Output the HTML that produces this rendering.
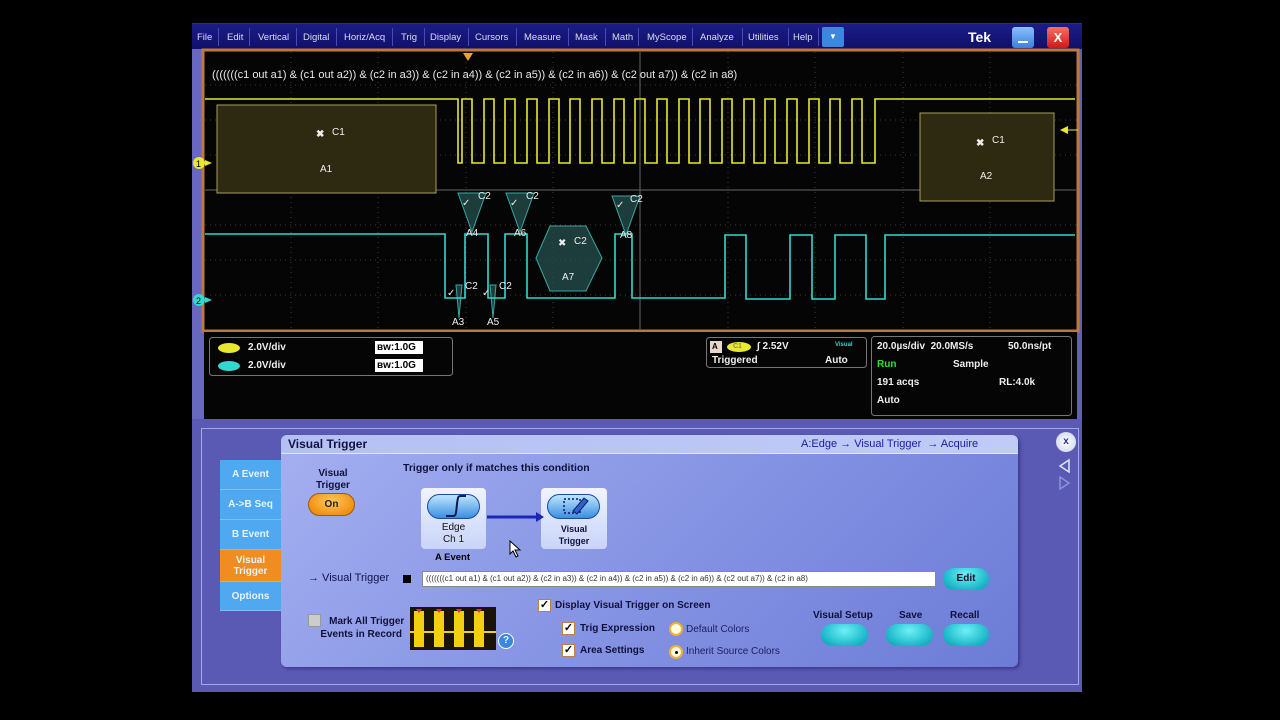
<!DOCTYPE html>
<html><head><meta charset="utf-8">
<style>
*{margin:0;padding:0;box-sizing:border-box}
body{width:1280px;height:720px;background:#000;position:relative;overflow:hidden;font-family:"Liberation Sans",sans-serif}
.abs{position:absolute}
.menu{left:192px;top:23px;width:890px;height:26px;background:linear-gradient(#1c1c88,#10106a);border-top:1px solid #2a2aa0}
.menu span{position:absolute;top:8px;font-size:9.5px;color:#dde;letter-spacing:0}
.sep{position:absolute;top:4px;width:1px;height:18px;background:#4a4ab0}
.lstrip{left:192px;top:49px;width:12px;height:643px;background:#6868c0}
.rstrip{left:1077px;top:49px;width:5px;height:371px;background:#6060b8}
.ro{color:#eee;font-size:10px;font-weight:bold;position:absolute}
.lower{left:192px;top:419px;width:890px;height:273px;background:#5a5ab4}
.dlg{left:281px;top:435px;width:737px;height:232px;border-radius:6px;background:linear-gradient(135deg,#a4b0f0 0%,#8694e4 50%,#6c7cd6 100%);box-shadow:2px 2px 3px #3a3a90}
.tab{position:absolute;left:220px;width:61px;background:#4fa8f0;color:#e8f4ff;font-size:10px;font-weight:bold;text-align:center;border-bottom:1px solid #7cc0f8}
.pill{position:absolute;border-radius:12px;background:radial-gradient(ellipse at 50% 30%,#6ef0f8,#1ab8c8 70%,#0f96aa);}
.cb{position:absolute;width:13px;height:13px;background:#fff;border:1px solid #c08040;font-size:11px;line-height:11px;text-align:center;color:#000;font-weight:bold}
.t{position:absolute;font-size:10px;font-weight:bold;color:#10103a}
</style></head><body>

<div class="abs menu">
<span style="left:5px">File</span><div class="sep" style="left:26px"></div>
<span style="left:35px">Edit</span><div class="sep" style="left:57px"></div>
<span style="left:66px">Vertical</span><div class="sep" style="left:104px"></div>
<span style="left:111px">Digital</span><div class="sep" style="left:144px"></div>
<span style="left:152px">Horiz/Acq</span><div class="sep" style="left:200px"></div>
<span style="left:209px">Trig</span><div class="sep" style="left:232px"></div>
<span style="left:238px">Display</span><div class="sep" style="left:276px"></div>
<span style="left:283px">Cursors</span><div class="sep" style="left:324px"></div>
<span style="left:332px">Measure</span><div class="sep" style="left:376px"></div>
<span style="left:383px">Mask</span><div class="sep" style="left:413px"></div>
<span style="left:420px">Math</span><div class="sep" style="left:446px"></div>
<span style="left:455px">MyScope</span><div class="sep" style="left:500px"></div>
<span style="left:508px">Analyze</span><div class="sep" style="left:550px"></div>
<span style="left:556px">Utilities</span><div class="sep" style="left:596px"></div>
<span style="left:601px">Help</span><div class="sep" style="left:626px"></div>
<div class="abs" style="left:630px;top:3px;width:22px;height:20px;background:#3a88e0;border-radius:2px;color:#fff;font-size:8px;text-align:center;line-height:20px">▼</div>
<div class="abs" style="left:776px;top:5px;color:#fff;font-weight:bold;font-size:14px">Tek</div>
<div class="abs" style="left:820px;top:3px;width:22px;height:21px;background:linear-gradient(#8cc0f8,#3a80e0);border-radius:3px"><div class="abs" style="left:6px;top:14px;width:10px;height:2px;background:#fff"></div></div>
<div class="abs" style="left:855px;top:3px;width:22px;height:21px;background:linear-gradient(#f87060,#d01818);border-radius:3px;color:#fff;font-weight:bold;font-size:13px;text-align:center;line-height:21px">X</div>
</div>
<div class="abs lstrip"></div>
<div class="abs rstrip"></div>

<svg class="abs" style="left:0;top:0" width="1280" height="420">
<rect x="203" y="50" width="875" height="281" fill="#050505" stroke="#c07838" stroke-width="3"/>
<g stroke="#3a3a3a" stroke-width="1" stroke-dasharray="1,4">
<line x1="291" y1="52" x2="291" y2="329"/><line x1="378" y1="52" x2="378" y2="329"/><line x1="466" y1="52" x2="466" y2="329"/><line x1="553" y1="52" x2="553" y2="329"/><line x1="728" y1="52" x2="728" y2="329"/><line x1="815" y1="52" x2="815" y2="329"/><line x1="903" y1="52" x2="903" y2="329"/><line x1="990" y1="52" x2="990" y2="329"/>
<line x1="205" y1="85" x2="1076" y2="85"/><line x1="205" y1="120" x2="1076" y2="120"/><line x1="205" y1="155" x2="1076" y2="155"/><line x1="205" y1="225" x2="1076" y2="225"/><line x1="205" y1="260" x2="1076" y2="260"/><line x1="205" y1="295" x2="1076" y2="295"/>
</g>
<g stroke="#666" stroke-width="1">
<line x1="205" y1="190" x2="1076" y2="190"/><line x1="640" y1="52" x2="640" y2="329"/>
</g>
<polygon points="463,53 473,53 468,61" fill="#f0a030"/>
<text x="212" y="78" fill="#e8e8e8" font-size="11" font-family="Liberation Sans">(((((((c1 out a1) &amp; (c1 out a2)) &amp; (c2 in a3)) &amp; (c2 in a4)) &amp; (c2 in a5)) &amp; (c2 in a6)) &amp; (c2 out a7)) &amp; (c2 in a8)</text>
<rect x="217" y="105" width="219" height="88" fill="#2e2a12" stroke="#a8a058"/>
<rect x="920" y="113" width="134" height="88" fill="#2e2a12" stroke="#a8a058"/>
<g fill="#24504e" fill-opacity="0.75" stroke="#3aa8a0">
<polygon points="458,193 486,193 472,232"/><polygon points="506,193 534,193 520,232"/><polygon points="612,196 640,196 626,235"/>
<polygon points="550,226 586,226 602,258 586,291 550,291 536,258"/>
<polygon points="456,285 462,285 459,318"/><polygon points="490,285 496,285 493,318"/>
</g>
<path d="M205,99 H458 V163 H462 V99 H472 V163 H484 V99 H494 V163 H505 V99 H515 V163 H527 V99 H537 V163 H549 V99 H559 V163 H570 V99 H580 V163 H592 V99 H602 V163 H614 V99 H624 V163 H635 V99 H645 V163 H657 V99 H667 V163 H679 V99 H689 V163 H700 V99 H710 V163 H722 V99 H732 V163 H744 V99 H754 V163 H765 V99 H775 V163 H787 V99 H797 V163 H809 V99 H819 V163 H830 V99 H840 V163 H852 V99 H862 V163 H875 V99 H1075" fill="none" stroke="#e8e830" stroke-width="1.6"/>
<path d="M205,234 H445 V298 H465 V234 H488 V298 H505 V234 H527 V298 H615 V234 H632 V298 H725 V235 H746 V299 H790 V235 H812 V299 H835 V235 H866 V299 H885 V235 H1075" fill="none" stroke="#30d8d0" stroke-width="1.6"/>
<g fill="#eee" font-size="10" font-family="Liberation Sans">
<text x="316" y="137" font-weight="bold">✖</text><text x="332" y="135">C1</text><text x="320" y="172">A1</text>
<text x="976" y="146" font-weight="bold">✖</text><text x="992" y="143">C1</text><text x="980" y="179">A2</text>
<text x="558" y="246">✖</text><text x="574" y="244">C2</text><text x="562" y="280">A7</text>
<text x="462" y="206">✓</text><text x="478" y="199">C2</text><text x="510" y="206">✓</text><text x="526" y="199">C2</text><text x="616" y="208">✓</text><text x="630" y="202">C2</text>
<text x="447" y="296">✓</text><text x="465" y="289">C2</text><text x="482" y="296">✓</text><text x="499" y="289">C2</text>
<text x="452" y="325">A3</text><text x="487" y="325">A5</text>
<text x="466" y="236">A4</text><text x="514" y="236">A6</text><text x="620" y="238">A8</text>
</g>
<circle cx="199" cy="163" r="6" fill="#e8e830"/><text x="196" y="167" font-size="9" fill="#000">1</text>
<polygon points="205,160 212,163 205,166" fill="#e8e830"/>
<circle cx="199" cy="300" r="6" fill="#30d8d0"/><text x="196" y="304" font-size="9" fill="#000">2</text>
<polygon points="205,297 212,300 205,303" fill="#30d8d0"/>
<polygon points="1060,130 1068,126 1068,134" fill="#e8e830"/><line x1="1066" y1="130" x2="1078" y2="130" stroke="#e8e830"/>
<rect x="204" y="332" width="873" height="87" fill="#050505"/>
<rect x="209.5" y="337.5" width="243" height="38" rx="3" fill="none" stroke="#777"/>
<rect x="706.5" y="337.5" width="160" height="30" rx="3" fill="none" stroke="#777"/>
<rect x="871.5" y="336.5" width="200" height="79" rx="3" fill="none" stroke="#777"/>
<ellipse cx="229" cy="348" rx="11" ry="5" fill="#e8e830"/><ellipse cx="229" cy="366" rx="11" ry="5" fill="#30d8d0"/>
<ellipse cx="739" cy="347" rx="12" ry="5" fill="#e8e830"/>
<rect x="375" y="341" width="48" height="13" fill="#fff"/><rect x="375" y="359" width="48" height="13" fill="#fff"/>
<rect x="710" y="341" width="12" height="12" fill="#e8d8c8"/>
</svg>
<div class="ro" style="left:248px;top:342px">2.0V/div</div>
<div class="ro" style="left:248px;top:360px">2.0V/div</div>
<div class="ro" style="left:377px;top:342px;color:#000">ʙw:1.0G</div>
<div class="ro" style="left:377px;top:360px;color:#000">ʙw:1.0G</div>
<div class="ro" style="left:712px;top:342px;color:#000;font-size:8px">A</div>
<div class="ro" style="left:733px;top:343px;color:#886;font-size:7px">C1</div>
<div class="ro" style="left:757px;top:341px">∫ 2.52V</div>
<div class="ro" style="left:835px;top:342px;color:#30d8d0;font-size:6px">Visual</div>
<div class="ro" style="left:712px;top:355px">Triggered</div>
<div class="ro" style="left:825px;top:355px">Auto</div>
<div class="ro" style="left:877px;top:341px">20.0µs/div&nbsp; 20.0MS/s</div>
<div class="ro" style="left:1008px;top:341px">50.0ns/pt</div>
<div class="ro" style="left:877px;top:359px;color:#30e030">Run</div>
<div class="ro" style="left:953px;top:359px">Sample</div>
<div class="ro" style="left:877px;top:377px">191 acqs</div>
<div class="ro" style="left:999px;top:377px">RL:4.0k</div>
<div class="ro" style="left:877px;top:395px">Auto</div>

<div class="abs lower"><div class="abs" style="left:9px;top:9px;width:878px;height:257px;border:1px solid #a8a8e8"></div></div>
<div class="abs dlg"></div>
<div class="abs" style="left:281px;top:435px;width:737px;height:19px;border-radius:6px 6px 0 0;background:linear-gradient(90deg,#b4c0f4,#c0cbf6);border-bottom:1px solid #e0e6ff"></div>
<div class="abs" style="left:288px;top:437px;font-size:12px;font-weight:bold;color:#121240">Visual Trigger</div>
<div class="abs" style="left:801px;top:438px;font-size:11px;color:#1820a0">A:Edge → Visual Trigger&nbsp; → Acquire</div>

<div class="tab" style="top:460px;height:30px;line-height:30px">A Event</div>
<div class="tab" style="top:490px;height:30px;line-height:30px">A-&gt;B Seq</div>
<div class="tab" style="top:520px;height:30px;line-height:30px">B Event</div>
<div class="tab" style="top:550px;height:32px;background:#f08c20;line-height:11px;padding-top:5px">Visual<br>Trigger</div>
<div class="tab" style="top:582px;height:29px;line-height:29px">Options</div>

<div class="t" style="left:316px;top:468px;text-align:center;line-height:12px">Visual<br>Trigger</div>
<div class="abs" style="left:308px;top:493px;width:47px;height:23px;border-radius:12px;background:radial-gradient(ellipse at 50% 35%,#ffc860,#f09010 75%);border:1px solid #a05808;text-align:center;line-height:21px;font-size:10px;font-weight:bold;color:#222">On</div>
<div class="t" style="left:403px;top:462px;font-size:10.5px">Trigger only if matches this condition</div>
<div class="abs" style="left:421px;top:488px;width:65px;height:61px;border-radius:4px;background:linear-gradient(#f0f4ff,#c8d4f8)"></div>
<div class="abs" style="left:541px;top:488px;width:66px;height:61px;border-radius:4px;background:linear-gradient(#f0f4ff,#c8d4f8)"></div>
<div class="abs" style="left:427px;top:494px;width:53px;height:25px;border-radius:13px;background:linear-gradient(#bfe6ff,#3b8ee0);border:1px solid #1a4aa0"></div>
<div class="abs" style="left:547px;top:494px;width:53px;height:25px;border-radius:13px;background:linear-gradient(#bfe6ff,#3b8ee0);border:1px solid #1a4aa0"></div>
<svg class="abs" style="left:420px;top:488px" width="200" height="70">
<path d="M26,28 H33 C36,28 36,26 37,16 C38,8 38,8 42,8 H46" stroke="#0c1a50" stroke-width="2" fill="none"/>
<path d="M67,29 H118" stroke="#1a28b8" stroke-width="3"/><polygon points="116,24 124,29 116,34" fill="#1a28b8"/>
<rect x="144" y="11" width="16" height="14" fill="none" stroke="#0c1a60" stroke-width="1.5" stroke-dasharray="2,2"/>
<path d="M153,23 L164,10 L168,13 L157,26 Z" fill="#3060d0" stroke="#0c1a60"/>
</svg>
<div class="t" style="left:421px;top:522px;width:65px;text-align:center;line-height:12px;font-weight:normal;color:#111">Edge<br>Ch 1</div>
<div class="t" style="left:541px;top:523px;width:66px;text-align:center;line-height:12px;font-size:9px">Visual<br>Trigger</div>
<div class="t" style="left:435px;top:552px;font-size:9.5px;color:#000">A Event</div>
<svg class="abs" style="left:509px;top:540px" width="14" height="18"><path d="M1,1 L1,14 L4,11 L7,17 L9,16 L6,10 L11,10 Z" fill="#fff" stroke="#000"/></svg>

<div class="abs" style="left:308px;top:572px;font-size:11px;color:#12124a">→ Visual Trigger</div>
<div class="abs" style="left:403px;top:575px;width:8px;height:8px;background:#000"></div>
<div class="abs" style="left:422px;top:571px;width:514px;height:16px;background:#fff;border:1px solid #888;font-size:8px;line-height:14px;padding-left:3px;color:#333;white-space:nowrap;overflow:hidden">(((((((c1 out a1) &amp; (c1 out a2)) &amp; (c2 in a3)) &amp; (c2 in a4)) &amp; (c2 in a5)) &amp; (c2 in a6)) &amp; (c2 out a7)) &amp; (c2 in a8)</div>
<div class="pill" style="left:943px;top:568px;width:46px;height:22px;text-align:center;line-height:22px;font-size:10px;font-weight:bold;color:#112">Edit</div>

<div class="cb" style="left:308px;top:614px;background:#ccc;border-color:#999"></div>
<div class="t" style="left:318px;top:615px;text-align:center;line-height:13px">&nbsp;&nbsp;&nbsp;&nbsp;Mark All Trigger<br>Events in Record</div>
<svg class="abs" style="left:410px;top:607px" width="86" height="43">
<rect width="86" height="43" fill="#1a1408"/>
<g fill="#f0d010"><rect x="4" y="4" width="10" height="36"/><rect x="24" y="4" width="10" height="36"/><rect x="44" y="4" width="10" height="36"/><rect x="64" y="4" width="10" height="36"/></g>
<line x1="0" y1="25" x2="86" y2="25" stroke="#f0d010" stroke-width="2"/>
<g fill="#e03030"><polygon points="6,2 12,2 9,6"/><polygon points="26,2 32,2 29,6"/><polygon points="46,2 52,2 49,6"/><polygon points="66,2 72,2 69,6"/></g>
</svg>
<div class="abs" style="left:498px;top:633px;width:16px;height:16px;border-radius:50%;background:#3a88e0;border:1px solid #fff;color:#fff;font-size:10px;text-align:center;line-height:14px;font-weight:bold">?</div>

<div class="cb" style="left:538px;top:599px">✓</div>
<div class="t" style="left:555px;top:600px">Display Visual Trigger on Screen</div>
<div class="cb" style="left:562px;top:622px">✓</div>
<div class="t" style="left:580px;top:623px">Trig Expression</div>
<div class="cb" style="left:562px;top:644px">✓</div>
<div class="t" style="left:580px;top:645px">Area Settings</div>
<div class="abs" style="left:669px;top:622px;width:14px;height:14px;border-radius:50%;background:#fffbe0;border:2px solid #f0b030"></div>
<div class="abs" style="left:686px;top:624px;font-size:10px;color:#202060">Default Colors</div>
<div class="abs" style="left:669px;top:645px;width:14px;height:14px;border-radius:50%;background:#fffbe0;border:2px solid #f0b030"><div class="abs" style="left:4px;top:4px;width:3px;height:3px;background:#000;border-radius:50%"></div></div>
<div class="abs" style="left:686px;top:646px;font-size:10px;color:#202060">Inherit Source Colors</div>

<div class="t" style="left:813px;top:610px">Visual Setup</div>
<div class="t" style="left:899px;top:610px">Save</div>
<div class="t" style="left:950px;top:610px">Recall</div>
<div class="pill" style="left:821px;top:624px;width:47px;height:22px"></div>
<div class="pill" style="left:886px;top:624px;width:47px;height:22px"></div>
<div class="pill" style="left:943px;top:624px;width:46px;height:22px"></div>

<div class="abs" style="left:1056px;top:432px;width:20px;height:20px;border-radius:50%;background:radial-gradient(#fff,#c8d0f0);color:#2030a0;font-size:10px;font-weight:bold;text-align:center;line-height:20px">x</div>
<svg class="abs" style="left:1057px;top:458px" width="16" height="34"><polygon points="12,2 12,14 3,8" fill="none" stroke="#e0e6ff" stroke-width="1.5"/><polygon points="3,19 3,31 12,25" fill="none" stroke="#8a94d8" stroke-width="1.5"/></svg>
</body></html>
